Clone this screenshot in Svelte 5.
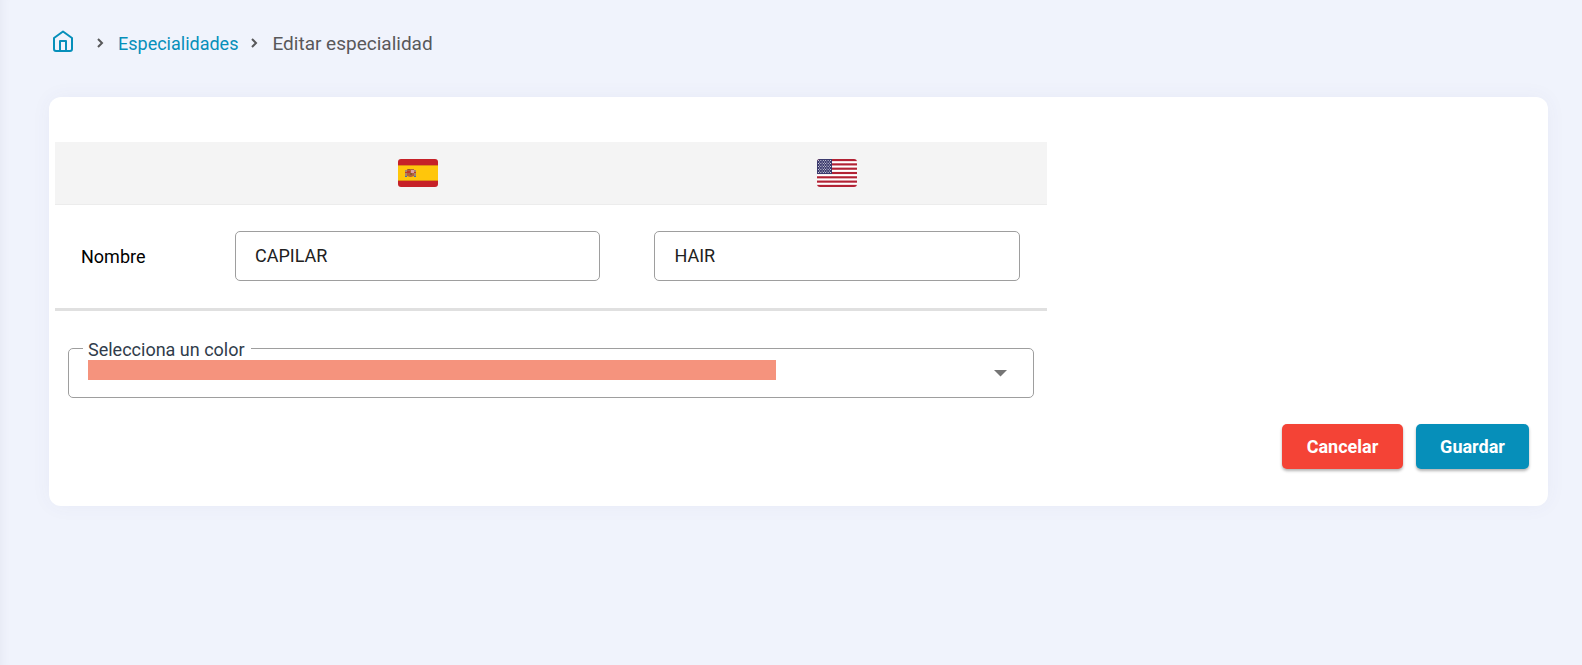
<script>
	const languages = [
		{ code: "es", name: "Español", value: "CAPILAR" },
		{ code: "en", name: "English", value: "HAIR" },
	];
	const colors = ["#f5937d", "#7dc4f5", "#8fd9a0"];

	let names = $state(languages.map((l) => l.value));
	let color = $state(colors[0]);
</script>

<div class="page">
	<nav class="breadcrumb" aria-label="Breadcrumb">
		<a class="home" href="#home" aria-label="Inicio">
			<svg viewBox="0 0 20 22" width="20" height="22" fill="none" stroke="currentColor" stroke-width="2">
				<path d="M1 8 10 1.5 19 8v11a2 2 0 0 1-2 2H3a2 2 0 0 1-2-2z" stroke-linejoin="round" />
				<path d="M7 21V11h6v10" stroke-linejoin="round" />
			</svg>
		</a>
		{@render chevron()}
		<a href="#especialidades">Especialidades</a>
		{@render chevron()}
		<span class="current">Editar especialidad</span>
	</nav>

	<form class="card" onsubmit={(e) => e.preventDefault()}>
		<div class="fields">
			<table>
				<thead>
					<tr>
						<td class="name"></td>
						{#each languages as lang (lang.code)}
							<th scope="col" aria-label={lang.name}>
								{#if lang.code === "es"}
									{@render spain()}
								{:else}
									{@render usa()}
								{/if}
							</th>
						{/each}
					</tr>
				</thead>
				<tbody>
					<tr>
						<th class="name" scope="row">Nombre</th>
						{#each languages as lang, i (lang.code)}
							<td>
								<input type="text" aria-label={`Nombre ${lang.name}`} bind:value={names[i]} />
							</td>
						{/each}
					</tr>
				</tbody>
			</table>

			<fieldset class="picker">
				<legend><label for="color">Selecciona un color</label></legend>
				<select id="color" bind:value={color}>
					{#each colors as c (c)}
						<option value={c} style={`background: ${c}`} aria-label={c}></option>
					{/each}
				</select>
				<div class="swatch" style={`background: ${color}`}></div>
				<svg class="arrow" viewBox="0 0 13 7" width="13" height="7">
					<path d="M0 0h13L6.5 6.5z" fill="currentColor" />
				</svg>
			</fieldset>
		</div>

		<div class="actions">
			<button type="button" class="cancel">Cancelar</button>
			<button type="submit">Guardar</button>
		</div>
	</form>
</div>

{#snippet chevron()}
	<svg class="chevron" viewBox="0 0 8 10" width="8" height="10" fill="none" stroke="currentColor" stroke-width="2">
		<path d="M2 1l4 4-4 4" />
	</svg>
{/snippet}

{#snippet spain()}
	<svg class="flag" viewBox="0 0 40 28" width="40" height="28">
		<path fill="#c62128" d="M0 0h40v28H0z" />
		<path fill="#e08a14" d="M0 6h40v16H0z" />
		<path fill="#ffc60b" d="M0 7h40v14H0z" />
		<path fill="#a7866b" d="M7 11h2v6H7zM16 11h2v6h-2z" />
		<path fill="#b4623c" d="M9 10h7v7l-3 1h-1l-3-1z" />
		<path fill="#c0392b" d="M9 12h3v2H9zM7 13h2v1H7zM16 13h2v1h-2z" />
		<path fill="#d9a0a5" d="M13 11h3v3h-3z" />
		<path fill="#8c5a2b" d="M10 10h2v1h-2zM12 14h2v2h-2z" />
		<path fill="#3f6fae" d="M7 17h2v1H7zM16 17h2v1h-2z" />
	</svg>
{/snippet}

{#snippet usa()}
	<svg class="flag" viewBox="0 0 40 28" width="40" height="28">
		<path fill="#fff" d="M0 0h40v28H0z" />
		{#each Array(7) as _, i}
			<rect fill="#b22234" width="40" height={28 / 13} y={(i * 56) / 13} />
		{/each}
		<path fill="#3c3b6e" d="M0 0h15v15H0z" />
		{#each Array(9) as _, row}
			{#each Array(row % 2 ? 5 : 6) as _, col}
				<circle fill="#fff" r="0.5" cx={1.5 + col * 2.4 + (row % 2 ? 1.2 : 0)} cy={1.5 + row * 1.5} />
			{/each}
		{/each}
	</svg>
{/snippet}

<style>
	:global(body) {
		background: #f0f3fc;
	}
	.page {
		min-height: 100vh;
		box-sizing: border-box;
		padding: 23px 34px 24px 49px;
		box-shadow: inset 12px 0 12px -12px rgba(60, 60, 100, 0.08);
		font-family: Roboto, sans-serif;
		font-size: 18px;
		color: #000;
	}
	.breadcrumb {
		display: flex;
		align-items: center;
		height: 40px;
		padding: 0 4px;
		margin-bottom: 34px;
		color: #58585a;
	}
	.breadcrumb a {
		color: #068fba;
		text-decoration: none;
	}
	.breadcrumb .current {
		font-size: 19px;
	}
	.home {
		display: flex;
		margin: 0 16px 4px 0;
	}
	.chevron {
		margin: 0 14px 0 12px;
		flex: none;
	}
	.home + .chevron {
		margin-left: 7px;
	}

	.card {
		padding: 45px 6px 37px;
		border-radius: 12px;
		background: #fff;
		box-shadow: 0 0 20px rgba(80, 80, 130, 0.05);
	}
	.fields {
		width: 66.7%;
	}
	table {
		width: 100%;
		table-layout: fixed;
		border-collapse: separate;
		border-spacing: 0;
		border-bottom: 3px solid #e0e0e0;
	}
	thead th,
	thead td {
		height: 62px;
		padding: 0;
		background: #f4f4f4;
		border-bottom: 1px solid #ececec;
	}
	tbody th,
	tbody td {
		padding: 26px 27px 27px;
	}
	tbody th {
		padding-left: 26px;
	}
	.name {
		width: 153px;
		box-sizing: border-box;
		font-weight: 400;
		text-align: left;
	}
	.flag {
		display: block;
		margin: 0 auto;
		border-radius: 3px;
	}
	input {
		display: block;
		width: 100%;
		height: 50px;
		box-sizing: border-box;
		padding: 0 19px 2px;
		border: 1px solid #9e9e9e;
		border-radius: 5px;
		background: #fff;
		font: inherit;
		color: #212121;
	}

	.picker {
		position: relative;
		height: 62px;
		box-sizing: border-box;
		margin: 25px 13px 26px;
		padding: 0;
		border: 1px solid #9e9e9e;
		border-radius: 5px;
	}
	legend {
		margin-left: 14px;
		padding: 4px 6px 0 5px;
		line-height: 20px;
		color: #303c4b;
	}
	select {
		position: absolute;
		inset: -12px 0 0;
		width: 100%;
		border: 0;
		border-radius: 5px;
		appearance: none;
		background: transparent;
	}
	.swatch {
		position: absolute;
		top: 0;
		left: 19px;
		width: 71.4%;
		height: 20px;
		pointer-events: none;
	}
	.arrow {
		position: absolute;
		top: 10px;
		right: 26px;
		color: #757575;
		pointer-events: none;
	}

	.actions {
		display: flex;
		justify-content: flex-end;
		gap: 13px;
		padding: 0 13px;
	}
	button {
		height: 45px;
		min-width: 113px;
		padding: 0 19px;
		border: 0;
		border-radius: 5px;
		background: #068fba;
		box-shadow: 0 2px 3px rgba(0, 0, 0, 0.3);
		font: 700 18px Roboto, sans-serif;
		color: #fff;
		cursor: pointer;
	}
	.cancel {
		min-width: 121px;
		background: #f44336;
	}
</style>
